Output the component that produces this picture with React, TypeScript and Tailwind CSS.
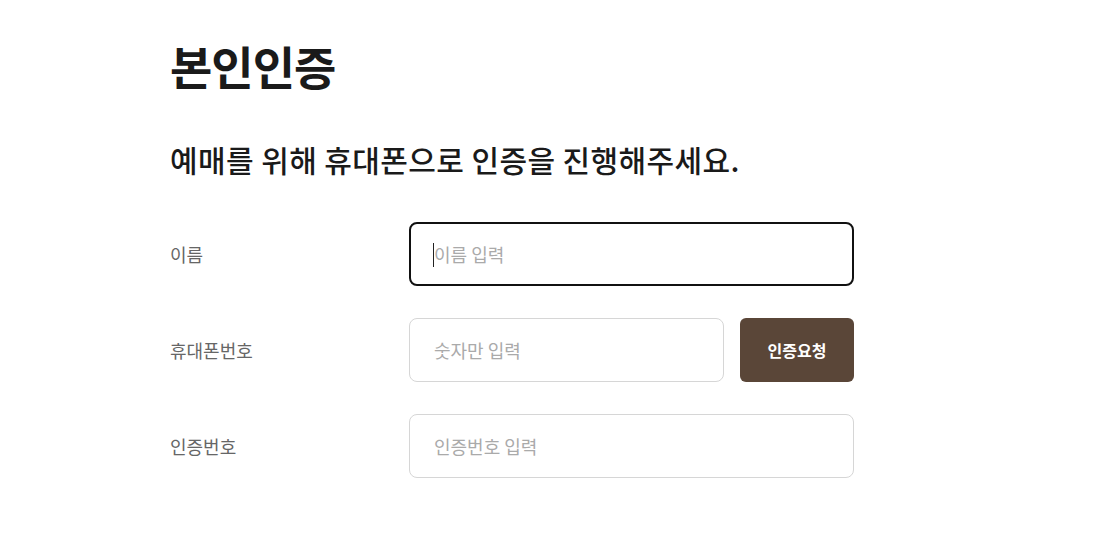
import React from "react";

const font = { fontFamily: '"Noto Sans CJK KR", "Noto Sans", sans-serif' };

export default function App() {
  return (
    <div className="min-h-[540px] w-full bg-white" style={font}>
      <div className="mx-auto w-[768px] pt-[33px]">
        <h1 className="text-[46px] font-bold leading-[64px] tracking-[-1px] text-[#1a1a1a]">본인인증</h1>
        <p className="mt-[42px] text-[30px] font-medium leading-[40px] tracking-[0.4px] text-[#1a1a1a]">
          예매를 위해 휴대폰으로 인증을 진행해주세요.
        </p>
        <div className="mt-[43px] flex flex-col gap-[32px]">
          <div className="flex items-center">
            <label className="w-[239px] text-[18px] text-[#666]">이름</label>
            <div className="relative">
              <input
                className="h-[64px] w-[445px] rounded-[8px] border-2 border-[#111] px-[23px] text-[18px] text-[#333] outline-none placeholder:text-[#aaa]"
                placeholder="이름 입력"
              />
              <span className="absolute left-[24px] top-[21px] h-[24px] w-px bg-[#222]" />
            </div>
          </div>
          <div className="flex items-center">
            <label className="w-[239px] text-[18px] text-[#666]">휴대폰번호</label>
            <div className="flex gap-[16px]">
              <input
                className="h-[64px] w-[315px] rounded-[8px] border border-[#d6d6d6] px-[24px] text-[18px] outline-none placeholder:text-[#aaa]"
                placeholder="숫자만 입력"
              />
              <button className="h-[64px] w-[114px] rounded-[6px] bg-[#5a4638] text-[16px] font-bold text-white">
                인증요청
              </button>
            </div>
          </div>
          <div className="flex items-center">
            <label className="w-[239px] text-[18px] text-[#666]">인증번호</label>
            <input
              className="h-[64px] w-[445px] rounded-[8px] border border-[#d6d6d6] px-[24px] text-[18px] outline-none placeholder:text-[#aaa]"
              placeholder="인증번호 입력"
            />
          </div>
        </div>
      </div>
    </div>
  );
}
